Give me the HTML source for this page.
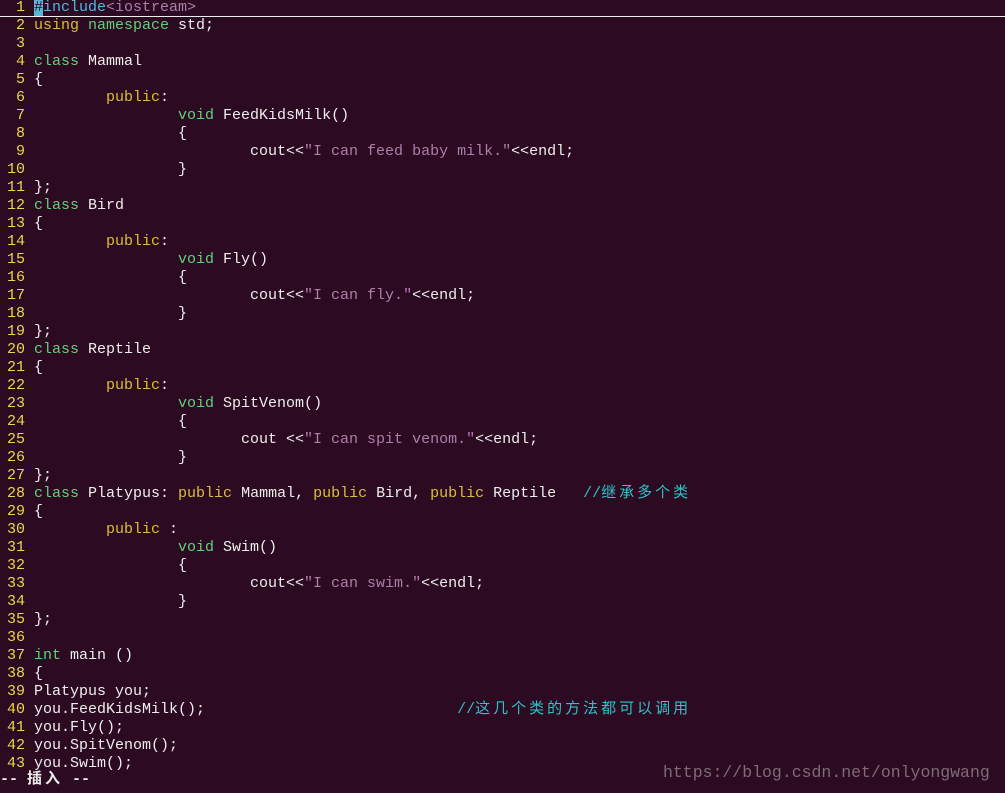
<!DOCTYPE html>
<html><head><meta charset="utf-8"><style>
html,body{margin:0;padding:0;background:#2c0a22;width:1005px;height:793px;overflow:hidden}
#c{position:absolute;left:0;top:-1px;width:1005px;font:15px/18px "Liberation Mono","Noto Sans CJK SC",monospace;color:#eeeeec;white-space:pre}
.r{height:18px;position:relative}
.n{color:#e9d84b;display:inline-block;width:34px;text-align:right;box-sizing:border-box;padding-right:9px}
.k{color:#d8bf3a}
.g{color:#62d07a}
.s{color:#ad7fa8}
.c{color:#2fc3c8}
.cj{letter-spacing:3px}
.l1{border-bottom:1px solid #eeeeec;height:17px}
#m{position:absolute;left:0;top:771px;font:bold 15px/18px "Liberation Mono","Noto Sans CJK SC",monospace;color:#eeeeec;white-space:pre}
#w{position:absolute;left:663px;top:763px;font:16.5px "Liberation Mono",monospace;color:#7d6b76}
</style></head><body>
<div id="c"><div class="r l1"><span class="n">1</span><span style="background:#55b8d8;color:#2c0a22">#</span><span style="color:#4fb8e0">include</span><span class="s">&lt;iostream&gt;</span></div><div class="r"><span class="n">2</span><span class="k">using</span> <span class="g">namespace</span> std;</div><div class="r"><span class="n">3</span></div><div class="r"><span class="n">4</span><span class="g">class</span> Mammal</div><div class="r"><span class="n">5</span>{</div><div class="r"><span class="n">6</span>        <span class="k">public</span>:</div><div class="r"><span class="n">7</span>                <span class="g">void</span> FeedKidsMilk()</div><div class="r"><span class="n">8</span>                {</div><div class="r"><span class="n">9</span>                        cout&lt;&lt;<span class="s">"I can feed baby milk."</span>&lt;&lt;endl;</div><div class="r"><span class="n">10</span>                }</div><div class="r"><span class="n">11</span>};</div><div class="r"><span class="n">12</span><span class="g">class</span> Bird</div><div class="r"><span class="n">13</span>{</div><div class="r"><span class="n">14</span>        <span class="k">public</span>:</div><div class="r"><span class="n">15</span>                <span class="g">void</span> Fly()</div><div class="r"><span class="n">16</span>                {</div><div class="r"><span class="n">17</span>                        cout&lt;&lt;<span class="s">"I can fly."</span>&lt;&lt;endl;</div><div class="r"><span class="n">18</span>                }</div><div class="r"><span class="n">19</span>};</div><div class="r"><span class="n">20</span><span class="g">class</span> Reptile</div><div class="r"><span class="n">21</span>{</div><div class="r"><span class="n">22</span>        <span class="k">public</span>:</div><div class="r"><span class="n">23</span>                <span class="g">void</span> SpitVenom()</div><div class="r"><span class="n">24</span>                {</div><div class="r"><span class="n">25</span>                       cout &lt;&lt;<span class="s">"I can spit venom."</span>&lt;&lt;endl;</div><div class="r"><span class="n">26</span>                }</div><div class="r"><span class="n">27</span>};</div><div class="r"><span class="n">28</span><span class="g">class</span> Platypus: <span class="k">public</span> Mammal, <span class="k">public</span> Bird, <span class="k">public</span> Reptile   <span class="c">//<span class="cj">继承多个类</span></span></div><div class="r"><span class="n">29</span>{</div><div class="r"><span class="n">30</span>        <span class="k">public</span> :</div><div class="r"><span class="n">31</span>                <span class="g">void</span> Swim()</div><div class="r"><span class="n">32</span>                {</div><div class="r"><span class="n">33</span>                        cout&lt;&lt;<span class="s">"I can swim."</span>&lt;&lt;endl;</div><div class="r"><span class="n">34</span>                }</div><div class="r"><span class="n">35</span>};</div><div class="r"><span class="n">36</span></div><div class="r"><span class="n">37</span><span class="g">int</span> main ()</div><div class="r"><span class="n">38</span>{</div><div class="r"><span class="n">39</span>Platypus you;</div><div class="r"><span class="n">40</span>you.FeedKidsMilk();                            <span class="c">//<span class="cj">这几个类的方法都可以调用</span></span></div><div class="r"><span class="n">41</span>you.Fly();</div><div class="r"><span class="n">42</span>you.SpitVenom();</div><div class="r"><span class="n">43</span>you.Swim();</div></div>
<div id="m">-- <span style="letter-spacing:3px">插入</span> --</div>
<div id="w">https://blog.csdn.net/onlyongwang</div>
</body></html>
